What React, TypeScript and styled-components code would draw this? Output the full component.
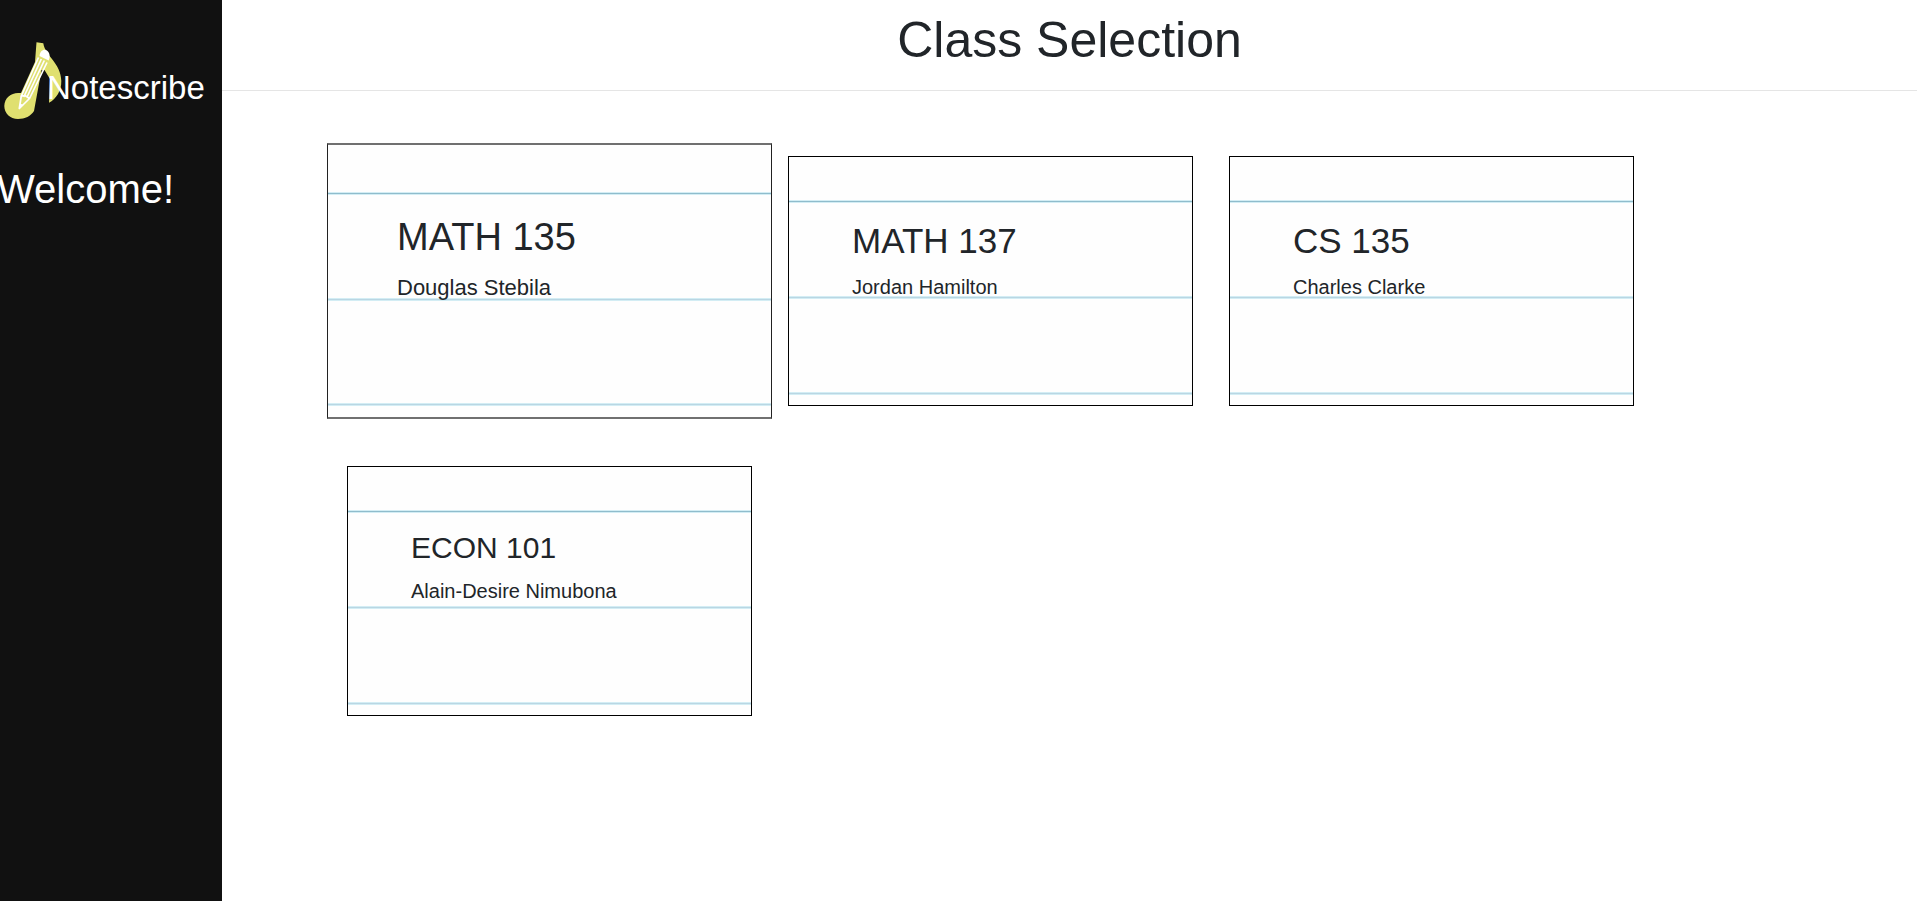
import React from "react";
import styled, { createGlobalStyle, css } from "styled-components";

const GlobalStyle = createGlobalStyle`
  *, *::before, *::after { box-sizing: border-box; }
  body {
    margin: 0;
    background: #fff;
    color: #212529;
    font-family: "Liberation Sans", Arial, sans-serif;
  }
  h1, h2, h3, p { margin: 0; font-weight: 400; }
`;

const Page = styled.div`
  display: flex;
  min-height: 100vh;
`;

const Sidebar = styled.aside`
  flex: 0 0 222px;
  overflow: hidden;
  background: #111;
  color: #fff;
`;

const LogoLink = styled.a`
  display: block;
  padding-top: 40px;
  color: #fff;
  text-decoration: none;
`;

const Logo = styled.svg`
  display: block;
  width: 222px;
  height: 84px;
`;

const Wordmark = styled.text`
  fill: #fff;
  font-family: "Liberation Sans", Arial, sans-serif;
  font-size: 33px;
`;

const Welcome = styled.p`
  margin: 41px 0 0 -3px;
  font-size: 40px;
  line-height: 48px;
`;

const Main = styled.main`
  flex: 1;
  min-width: 0;
`;

const Header = styled.header`
  padding: 10px 0 20px;
  border-bottom: 1px solid #e5e5e5;
  text-align: center;
`;

const Title = styled.h1`
  font-size: 50px;
  line-height: 60px;
`;

const Classes = styled.section`
  display: grid;
  grid-template-columns: repeat(auto-fill, 405px);
  grid-auto-rows: 250px;
  justify-content: space-between;
  place-items: center;
  row-gap: 60px;
  padding: 65px 283px 60px 125px;
`;

const rule = (y: number, color = "#b9d6e3") => css`
  linear-gradient(#d3edf4 0 1px, ${color} 1px 2px, #d3edf4 2px 3px) 0 ${y}px / 100% 3px no-repeat
`;

const Card = styled.a<{ $active?: boolean }>`
  display: flex;
  flex-direction: column;
  flex: none;
  gap: 10px;
  width: 405px;
  height: 250px;
  padding: 63px 0 0 63px;
  border: 1px solid #000;
  color: inherit;
  text-decoration: none;
  background: ${rule(43, "#8fbccc")}, ${rule(139)}, ${rule(235)}, #fefefe;

  ${(p) =>
    p.$active &&
    css`
      gap: 11px;
      width: 445px;
      height: 276px;
      padding: 69px 0 0 69px;
      border: solid #707070;
      border-width: 2px 1px;
      border-left-color: #222;
      border-right-color: #222;
      background: ${rule(47, "#8fbccc")}, ${rule(153)}, ${rule(258)}, #fefefe;
    `}
`;

const Course = styled.h2<{ $size: "small" | "medium" | "large" }>`
  font-size: ${(p) => ({ small: 30, medium: 35, large: 38 })[p.$size]}px;
  line-height: ${(p) => ({ small: 36, medium: 42, large: 46 })[p.$size]}px;
`;

const Teacher = styled.p<{ $large?: boolean }>`
  font-size: ${(p) => (p.$large ? 22 : 20)}px;
  line-height: ${(p) => (p.$large ? 33 : 30)}px;
`;

type CourseInfo = {
  name: string;
  teacher: string;
  size: "small" | "medium" | "large";
};

const courses: CourseInfo[] = [
  { name: "MATH 135", teacher: "Douglas Stebila", size: "large" },
  { name: "MATH 137", teacher: "Jordan Hamilton", size: "medium" },
  { name: "CS 135", teacher: "Charles Clarke", size: "medium" },
  { name: "ECON 101", teacher: "Alain-Desire Nimubona", size: "small" },
];

export default function App() {
  return (
    <Page>
      <GlobalStyle />
      <Sidebar>
        <LogoLink href="#">
          <Logo viewBox="0 40 222 84" role="img" aria-label="Notescribe">
            {/* eighth note */}
            <path
              d="M36.5 42.3 L43.3 43.3 C45 56 61 63 61.3 81 C61.5 91 56 99 49 102.8 L50 79 L44.500 70 L41.500 70 L34 111 C31 116 25 119 18 119 C10 119 4.300 113 4.300 106 C4.500 98 11 93 18 93 L21 93 L35 62 Z"
              fill="#e0e070"
            />
            {/* pencil */}
            <path
              d="M38.500 57.500 L21.300 96 L19.300 108.500 L29.500 98.500 L47 62.500 M41.300 59 L23.800 97 M44.300 60.500 L26.800 97.500 M21.300 96 L25 95.500 L29.500 98.500"
              fill="none"
              stroke="#fff"
              strokeWidth="1.7"
              strokeLinejoin="round"
            />
            <path
              d="M39.500 56 C40 51 43.500 48.800 46.500 50.300 C49.500 52 50.500 56 48.700 60.500 Z"
              fill="#fff"
            />
            <path d="M19 109.500 L20 103.500 L23.500 105 Z" fill="#fff" />
            <Wordmark x="47" y="99">Notescribe</Wordmark>
          </Logo>
        </LogoLink>
        <Welcome>Welcome!</Welcome>
      </Sidebar>
      <Main>
        <Header>
          <Title>Class Selection</Title>
        </Header>
        <Classes>
          {courses.map((c) => (
            <Card key={c.name} href="#" $active={c.size === "large"}>
              <Course $size={c.size}>{c.name}</Course>
              <Teacher $large={c.size === "large"}>{c.teacher}</Teacher>
            </Card>
          ))}
        </Classes>
      </Main>
    </Page>
  );
}
